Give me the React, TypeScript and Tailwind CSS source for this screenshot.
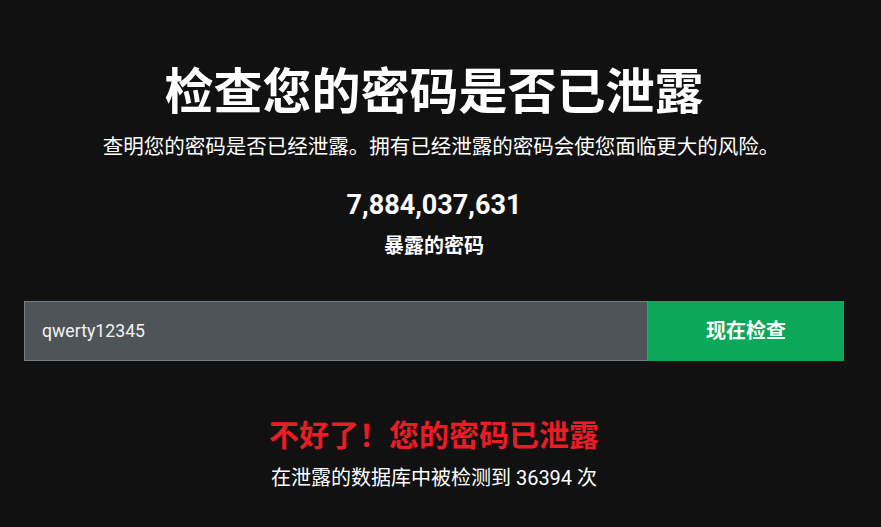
import React, { useState } from "react";

const font = { fontFamily: "Roboto, 'Noto Sans CJK SC', sans-serif" };

export default function App() {
  const [pwd, setPwd] = useState("qwerty12345");

  return (
    <div className="min-h-[527px] w-full bg-[#111111] text-white" style={font}>
      <div className="w-[868px]">
        <div className="flex flex-col items-center pt-[60px]">
          <h1 className="text-[49px] font-bold leading-[66px]">检查您的密码是否已泄露</h1>
          <p className="mt-[7px] pl-[14px] text-[20.5px] leading-[28px]">
            查明您的密码是否已经泄露。拥有已经泄露的密码会使您面临更大的风险。
          </p>
          <div className="mt-[27px] text-[27px] font-bold leading-[34px]">7,884,037,631</div>
          <div className="mt-[12px] text-[20px] font-bold leading-[24px]">暴露的密码</div>
        </div>

        <div className="ml-[24px] mt-[43px] flex w-[820px]">
          <input
            type="text"
            value={pwd}
            onChange={(e) => setPwd(e.target.value)}
            className="h-[60px] flex-1 border border-[#7a7d80] bg-[#4f5458] px-[17px] text-[17.7px] text-[#f2f2f2] outline-0"
          />
          <button
            type="button"
            className="h-[60px] w-[196px] bg-[#0aa858] text-[20px] font-bold text-white"
          >
            现在检查
          </button>
        </div>

        <div className="flex flex-col items-center pt-[57px]">
          <div className="text-[30px] font-bold leading-[36px] text-[#ec1c24]">
            不好了！您的密码已泄露
          </div>
          <div className="mt-[10px] text-[20px] leading-[28px]">
            在泄露的数据库中被检测到 36394 次
          </div>
        </div>
      </div>
    </div>
  );
}
